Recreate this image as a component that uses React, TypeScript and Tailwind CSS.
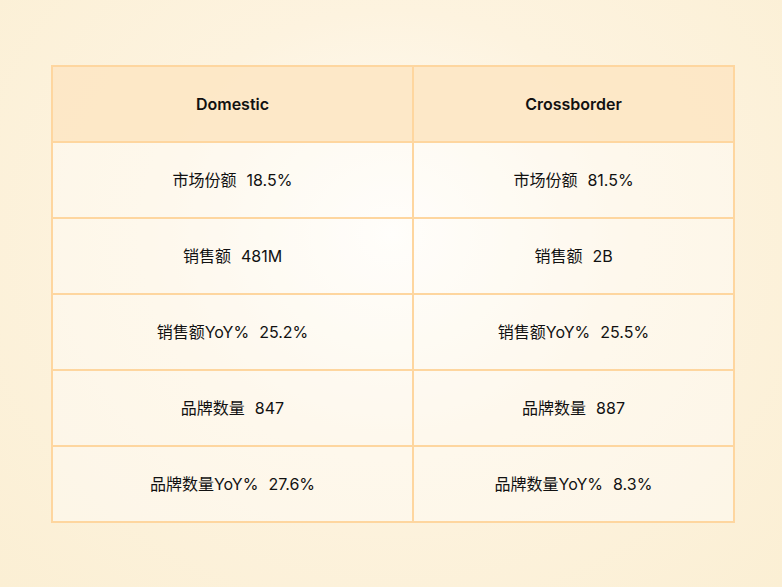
import React from "react";

const rows = [
  { label: "市场份额", domestic: "18.5%", cross: "81.5%" },
  { label: "销售额", domestic: "481M", cross: "2B" },
  { label: "销售额YoY%", domestic: "25.2%", cross: "25.5%" },
  { label: "品牌数量", domestic: "847", cross: "887" },
  { label: "品牌数量YoY%", domestic: "27.6%", cross: "8.3%" },
];

const Cell = ({ label, value }: { label: string; value: string }) => (
  <td className="border-2 border-[#fed69f] h-[76px] text-center align-middle pt-[1px]">
    <span>{label}</span>
    <span className="ml-[10px]">{value}</span>
  </td>
);

const App = () => {
  return (
    <div
      className="w-[782px] h-[587px] flex items-center pl-[51px] bg-[radial-gradient(ellipse_at_50%_40%,#fffdf8_0%,#fdf3df_45%,#fbefd4_100%)]"
      style={{ fontFamily: 'Inter, "Noto Sans CJK SC", sans-serif' }}
    >
      <table className="w-[684px] border-collapse text-[16px] text-[#111111] bg-white/40">
        <thead>
          <tr className="bg-[#fde5c3]/90">
            <th className="w-[361px] h-[76px] border-2 border-[#fed69f] font-semibold pt-[1px]">Domestic</th>
            <th className="h-[76px] border-2 border-[#fed69f] font-semibold pt-[1px]">Crossborder</th>
          </tr>
        </thead>
        <tbody>
          {rows.map((r) => (
            <tr key={r.label}>
              <Cell label={r.label} value={r.domestic} />
              <Cell label={r.label} value={r.cross} />
            </tr>
          ))}
        </tbody>
      </table>
    </div>
  );
};

export default App;
